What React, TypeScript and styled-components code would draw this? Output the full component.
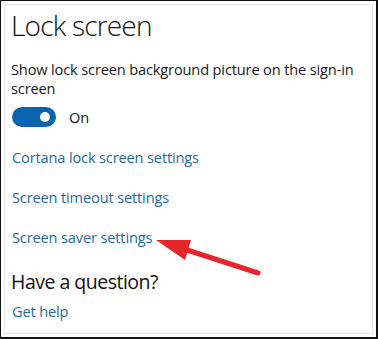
import React from "react";
import styled, { createGlobalStyle } from "styled-components";

const Global = createGlobalStyle`
  html, body {
    margin: 0;
    padding: 0;
    background: #ffffff;
  }
  body {
    font-family: "Open Sans", "Noto Sans", "Liberation Sans", sans-serif;
  }
`;

const Frame = styled.div`
  position: relative;
  box-sizing: border-box;
  width: 378px;
  height: 339px;
  border-top: 1px solid #111;
  border-left: 1px solid #111;
  border-right: 2px solid #111;
  border-bottom: 2px solid #111;
  padding: 3px;
  background: #fff;
`;

const Panel = styled.div`
  box-sizing: border-box;
  height: 100%;
  border: 1px solid #e6e6e6;
  padding: 0 6px;
  display: flex;
  flex-direction: column;
`;

const Title = styled.h1`
  margin: 1px 0 0;
  font-size: 28px;
  font-weight: 300;
  line-height: 38px;
  color: #111;
  letter-spacing: -0.8px;
`;

const Description = styled.p`
  margin: 16px 0 0;
  font-size: 14.6px;
  line-height: 19px;
  color: #1a1a1a;
  letter-spacing: -0.15px;
`;

const ToggleRow = styled.div`
  display: flex;
  align-items: center;
  gap: 13px;
  margin-top: 9px;
  padding-left: 1px;
`;

const Switch = styled.div<{ $on: boolean }>`
  position: relative;
  width: 44px;
  height: 20px;
  border-radius: 10px;
  background: ${(p) => (p.$on ? "#0a63ad" : "#fff")};
`;

const Knob = styled.span`
  position: absolute;
  right: 6px;
  top: 5px;
  width: 10px;
  height: 10px;
  border-radius: 50%;
  background: #fff;
`;

const ToggleLabel = styled.span`
  font-size: 14.6px;
  color: #111;
`;

const Link = styled.a<{ $gap: number }>`
  display: block;
  margin-top: ${(p) => p.$gap}px;
  font-size: 14.6px;
  line-height: 18px;
  color: #1f6aa5;
  text-decoration: none;
  letter-spacing: -0.15px;
  padding-left: 1px;
`;

const SubTitle = styled.h2`
  margin: 23px 0 0;
  font-size: 19.5px;
  font-weight: 400;
  line-height: 26px;
  color: #111;
  letter-spacing: -0.5px;
`;

const Arrow = styled.svg`
  position: absolute;
  left: 150px;
  top: 226px;
  width: 115px;
  height: 52px;
  overflow: visible;
`;

export default function App() {
  return (
    <>
      <Global />
      <Frame>
        <Panel>
          <Title>Lock screen</Title>
          <Description>
            Show lock screen background picture on the sign-in screen
          </Description>
          <ToggleRow>
            <Switch $on>
              <Knob />
            </Switch>
            <ToggleLabel>On</ToggleLabel>
          </ToggleRow>
          <Link $gap={21}>Cortana lock screen settings</Link>
          <Link $gap={22}>Screen timeout settings</Link>
          <Link $gap={22}>Screen saver settings</Link>
          <SubTitle>Have a question?</SubTitle>
          <Link $gap={7}>Get help</Link>
        </Panel>
        <Arrow viewBox="0 0 115 52">
          <line
            x1="107"
            y1="46"
            x2="30"
            y2="21"
            stroke="#e8242a"
            strokeWidth="5"
            strokeLinecap="round"
          />
          <polygon points="5,13 40,13 34,33" fill="#e8242a" />
        </Arrow>
      </Frame>
    </>
  );
}
